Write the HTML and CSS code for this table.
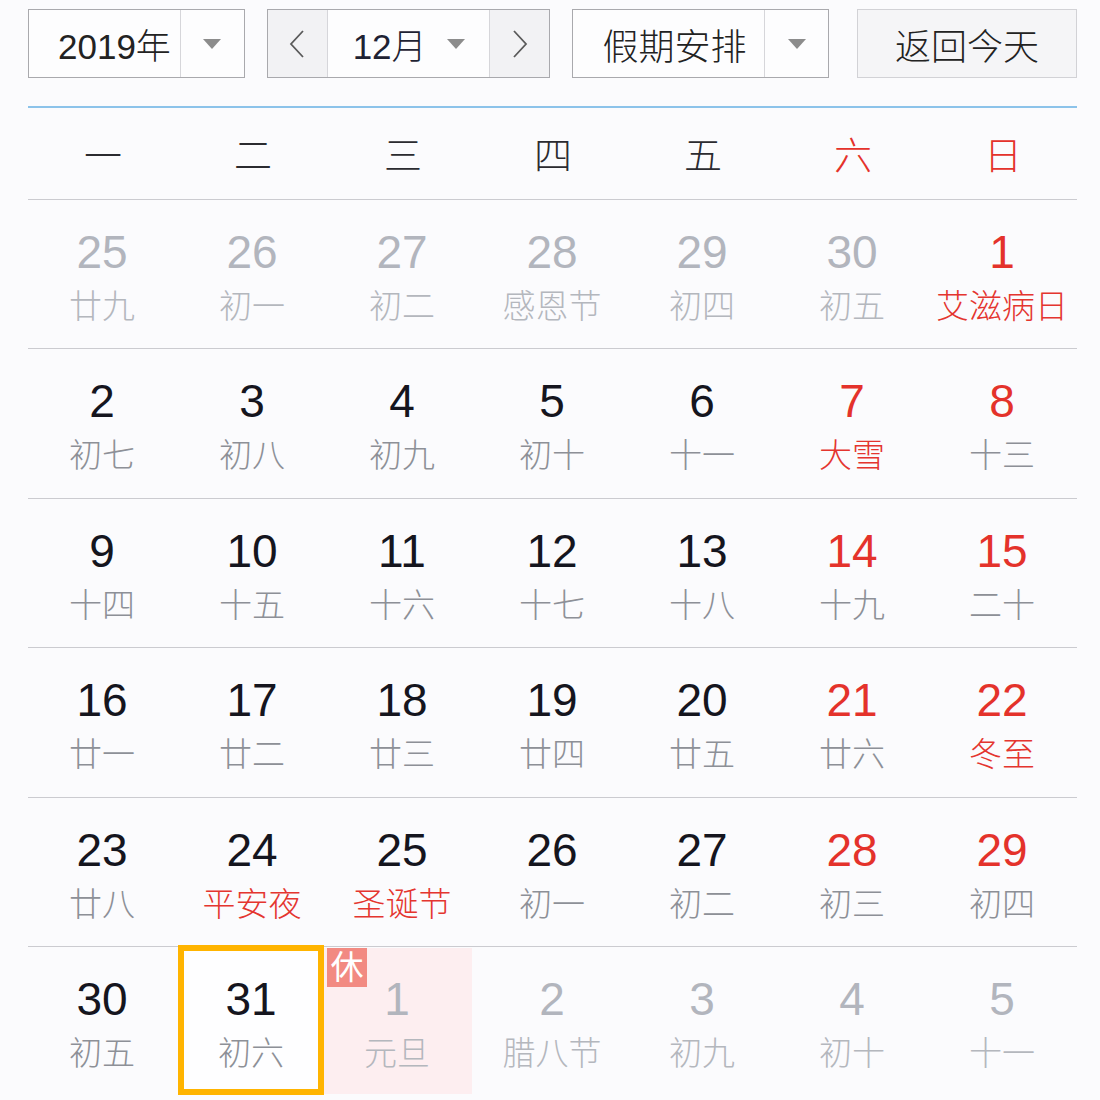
FILE: index.html
```html
<!DOCTYPE html>
<html lang="zh-CN">
<head>
<meta charset="utf-8">
<title>万年历</title>
<link rel="stylesheet" href="styles.css">
</head>
<body>
<div class="cal">
  <div class="toolbar">
    <div class="select year-sel">
      <span class="sel-text">2019年</span>
      <span class="sel-arrow"><svg width="18" height="10" viewBox="0 0 18 10"><polygon points="0,0 18,0 9,10" fill="#8c8c8c"/></svg></span>
    </div>
    <div class="month-nav">
      <span class="nav-btn"><svg width="16" height="28" viewBox="0 0 16 28"><path d="M14 1 L2 14 L14 27" fill="none" stroke="#5a5a5a" stroke-width="1.8"/></svg></span>
      <span class="month-sel"><span class="sel-text">12月</span><svg width="18" height="10" viewBox="0 0 18 10"><polygon points="0,0 18,0 9,10" fill="#8c8c8c"/></svg></span>
      <span class="nav-btn next"><svg width="16" height="28" viewBox="0 0 16 28"><path d="M2 1 L14 14 L2 27" fill="none" stroke="#5a5a5a" stroke-width="1.8"/></svg></span>
    </div>
    <div class="select holiday-sel">
      <span class="sel-text">假期安排</span>
      <span class="sel-arrow"><svg width="18" height="10" viewBox="0 0 18 10"><polygon points="0,0 18,0 9,10" fill="#8c8c8c"/></svg></span>
    </div>
    <div class="today-btn">返回今天</div>
  </div>

  <div class="weekdays">
    <span>一</span><span>二</span><span>三</span><span>四</span><span>五</span><span class="red">六</span><span class="red">日</span>
  </div>

  <div class="week">
    <div class="cell other"><span class="num">25</span><span class="lunar">廿九</span></div>
    <div class="cell other"><span class="num">26</span><span class="lunar">初一</span></div>
    <div class="cell other"><span class="num">27</span><span class="lunar">初二</span></div>
    <div class="cell other"><span class="num">28</span><span class="lunar">感恩节</span></div>
    <div class="cell other"><span class="num">29</span><span class="lunar">初四</span></div>
    <div class="cell other"><span class="num">30</span><span class="lunar">初五</span></div>
    <div class="cell weekend"><span class="num">1</span><span class="lunar fest">艾滋病日</span></div>
  </div>
  <div class="week">
    <div class="cell"><span class="num">2</span><span class="lunar">初七</span></div>
    <div class="cell"><span class="num">3</span><span class="lunar">初八</span></div>
    <div class="cell"><span class="num">4</span><span class="lunar">初九</span></div>
    <div class="cell"><span class="num">5</span><span class="lunar">初十</span></div>
    <div class="cell"><span class="num">6</span><span class="lunar">十一</span></div>
    <div class="cell weekend"><span class="num">7</span><span class="lunar fest">大雪</span></div>
    <div class="cell weekend"><span class="num">8</span><span class="lunar">十三</span></div>
  </div>
  <div class="week">
    <div class="cell"><span class="num">9</span><span class="lunar">十四</span></div>
    <div class="cell"><span class="num">10</span><span class="lunar">十五</span></div>
    <div class="cell"><span class="num">11</span><span class="lunar">十六</span></div>
    <div class="cell"><span class="num">12</span><span class="lunar">十七</span></div>
    <div class="cell"><span class="num">13</span><span class="lunar">十八</span></div>
    <div class="cell weekend"><span class="num">14</span><span class="lunar">十九</span></div>
    <div class="cell weekend"><span class="num">15</span><span class="lunar">二十</span></div>
  </div>
  <div class="week">
    <div class="cell"><span class="num">16</span><span class="lunar">廿一</span></div>
    <div class="cell"><span class="num">17</span><span class="lunar">廿二</span></div>
    <div class="cell"><span class="num">18</span><span class="lunar">廿三</span></div>
    <div class="cell"><span class="num">19</span><span class="lunar">廿四</span></div>
    <div class="cell"><span class="num">20</span><span class="lunar">廿五</span></div>
    <div class="cell weekend"><span class="num">21</span><span class="lunar">廿六</span></div>
    <div class="cell weekend"><span class="num">22</span><span class="lunar fest">冬至</span></div>
  </div>
  <div class="week">
    <div class="cell"><span class="num">23</span><span class="lunar">廿八</span></div>
    <div class="cell"><span class="num">24</span><span class="lunar fest">平安夜</span></div>
    <div class="cell"><span class="num">25</span><span class="lunar fest">圣诞节</span></div>
    <div class="cell"><span class="num">26</span><span class="lunar">初一</span></div>
    <div class="cell"><span class="num">27</span><span class="lunar">初二</span></div>
    <div class="cell weekend"><span class="num">28</span><span class="lunar">初三</span></div>
    <div class="cell weekend"><span class="num">29</span><span class="lunar">初四</span></div>
  </div>
  <div class="week last">
    <div class="cell"><span class="num">30</span><span class="lunar">初五</span></div>
    <div class="cell today"><span class="num">31</span><span class="lunar">初六</span></div>
    <div class="cell other rest"><span class="badge">休</span><span class="num">1</span><span class="lunar">元旦</span></div>
    <div class="cell other"><span class="num">2</span><span class="lunar">腊八节</span></div>
    <div class="cell other"><span class="num">3</span><span class="lunar">初九</span></div>
    <div class="cell other"><span class="num">4</span><span class="lunar">初十</span></div>
    <div class="cell other"><span class="num">5</span><span class="lunar">十一</span></div>
  </div>
</div>
</body>
</html>
```
FILE: styles.css
```css
html, body {
  margin: 0;
  padding: 0;
  background: #fbfbfd;
}
body {
  font-family: "Liberation Sans", "Noto Sans CJK SC", sans-serif;
  color: #1a1a22;
  overflow: hidden;
  height: 1100px;
}
.cal {
  width: 1050px;
  margin-left: 27px;
}

/* toolbar */
.toolbar {
  display: flex;
  align-items: stretch;
  height: 69px;
  margin-top: 9px;
  margin-left: 1px;
}
.select {
  display: flex;
  align-items: stretch;
  box-sizing: border-box;
  border: 1px solid #a9a9ad;
  background: #fdfdfe;
}
.sel-text {
  display: flex;
  align-items: center;
  font-size: 35px;
  font-weight: 300;
  color: #222;
  padding-left: 29px;
  box-sizing: border-box;
  border-right: 1px solid #d6d6da;
}
.sel-arrow {
  flex: 1;
  display: flex;
  align-items: center;
  justify-content: center;
}
.year-sel { width: 217px; }
.year-sel .sel-text { width: 152px; }
.holiday-sel { width: 257px; margin-left: 22px; }
.holiday-sel .sel-text { width: 192px; font-size: 36px; }

.month-nav {
  display: flex;
  width: 284px;
  margin-left: 22px;
  box-sizing: border-box;
  border: 1px solid #a9a9ad;
  background: #fdfdfe;
}
.nav-btn {
  width: 59px;
  flex: none;
  display: flex;
  align-items: center;
  justify-content: center;
  background: #f2f2f4;
  border-right: 1px solid #d6d6da;
}
.nav-btn.next {
  border-right: none;
  border-left: 1px solid #d6d6da;
}
.month-sel {
  flex: 1;
  display: flex;
  align-items: center;
  justify-content: center;
  gap: 20px;
}
.month-sel .sel-text {
  border: none;
  padding: 0;
  color: #1e2233;
}

.today-btn {
  width: 220px;
  margin-left: 28px;
  box-sizing: border-box;
  border: 1px solid #d2d2d6;
  background: #f5f5f7;
  display: flex;
  align-items: center;
  justify-content: center;
  font-size: 36px;
  font-weight: 300;
  color: #222;
}

/* weekday header */
.weekdays {
  margin-top: 28px;
  margin-left: 1px;
  border-top: 2px solid #8cc3ea;
  border-bottom: 1px solid #cbcbd0;
  height: 91px;
  display: grid;
  grid-template-columns: repeat(7, 150px);
  align-items: center;
}
.weekdays span {
  text-align: center;
  font-size: 38px;
  font-weight: 300;
  color: #2b2b30;
  padding-bottom: 2px;
}
.weekdays .red { color: #e4322b; }

/* weeks */
.week {
  display: grid;
  grid-template-columns: repeat(7, 150px);
  height: 148.4px;
  margin-left: 1px;
  border-bottom: 1px solid #cbcbd0;
}
.week.last {
  border-bottom: none;
  height: 154px;
}
.cell {
  position: relative;
  display: flex;
  flex-direction: column;
  align-items: center;
  padding-top: 27px;
  padding-right: 2px;
  box-sizing: border-box;
}
.num {
  font-size: 46px;
  line-height: 50px;
  color: #15151e;
}
.lunar {
  font-size: 33px;
  font-weight: 300;
  line-height: 40px;
  margin-top: 10px;
  color: #8d9097;
  white-space: nowrap;
}
.weekend .num { color: #e4322b; }
.lunar.fest { color: #e4352f; }
.other .num { color: #b2b5bd; }
.other .lunar { color: #b4b7bd; }

.today {
  border: 6px solid #ffb400;
  margin: -2px 4px 6px 0;
  padding-top: 23px;
  padding-right: 0;
  background: #fefeff;
}
.rest {
  background: #fdeef0;
  margin: 1px 6px 7px -4px;
  padding-top: 26px;
}
.badge {
  position: absolute;
  left: 3px;
  top: 0;
  width: 40px;
  height: 39px;
  background: #f28a82;
  color: #fff;
  font-size: 33px;
  font-weight: 400;
  line-height: 39px;
  text-align: center;
}
```
